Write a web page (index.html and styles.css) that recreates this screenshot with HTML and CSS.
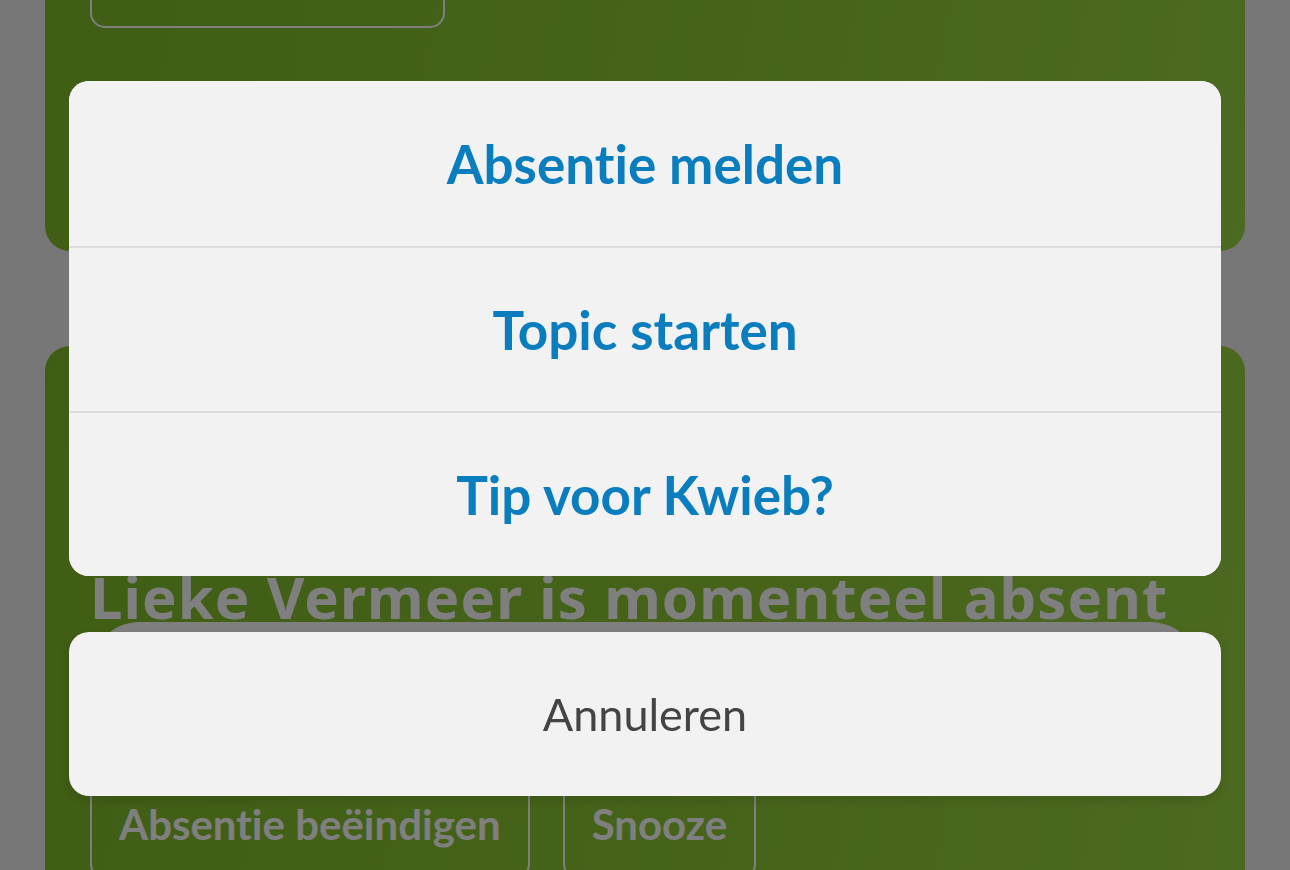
FILE: index.html
```html
<!DOCTYPE html>
<html lang="nl">
<head>
    <meta charset="UTF-8">
    <meta name="viewport" content="width=device-width, initial-scale=1.0">
    <title>Kwieb</title>
    <link rel="stylesheet" href="styles.css">
</head>
<body>

    <div class="page">
        <!-- card above the absence card -->
        <div class="card card-top">
            <button class="outline-btn wide"></button>
        </div>

        <!-- absence card -->
        <div class="card card-absent">
            <h2 class="absent-title">Lieke Vermeer is momenteel absent</h2>
            <div class="absent-box"></div>
            <div class="btn-row">
                <button class="outline-btn">Absentie beëindigen</button>
                <button class="outline-btn">Snooze</button>
            </div>
        </div>
    </div>

    <!-- action sheet -->
    <div class="backdrop"></div>
    <div class="sheet">
        <div class="sheet-group">
            <button class="sheet-item action">Absentie melden</button>
            <button class="sheet-item action">Topic starten</button>
            <button class="sheet-item action">Tip voor Kwieb?</button>
        </div>
        <button class="sheet-item cancel">Annuleren</button>
    </div>

</body>
</html>
```

FILE: styles.css
```css
body {
    margin: 0;
    background-color: #eeeeee;
    font-family: "Lato", "Liberation Sans", sans-serif;
    font-variant-ligatures: none;
    overflow: hidden;
    height: 870px;
}

.page {
    padding: 0 45px;
}

.card {
    background: linear-gradient(100deg, #80bb2a 0%, #8fc836 60%, #9ad443 100%);
    border-radius: 25px;
    padding: 0 45px;
}

.card-top {
    margin-top: -60px;
    padding-bottom: 222px;
}

.outline-btn {
    background: transparent;
    border: 2px solid #ffffff;
    border-radius: 15px;
    color: #ffffff;
    font-family: "Lato", "Liberation Sans", sans-serif;
    font-variant-ligatures: none;
    font-weight: 700;
    font-size: 42px;
    padding: 10px 27px 0;
    height: 120px;
    box-sizing: border-box;
}

.outline-btn.wide {
    width: 355px;
    height: 88px;
}

.card-absent {
    margin-top: 95px;
    padding-top: 227px;
    height: 600px;
}

.absent-title {
    margin: 0 0 1px;
    color: #ffffff;
    font-family: "Noto Sans", "Lato", sans-serif;
    font-size: 58px;
    font-weight: 700;
    line-height: 48px;
    letter-spacing: 1.1px;
    white-space: nowrap;
}

.absent-box {
    background-color: #ffffff;
    border-radius: 50px;
    height: 130px;
}

.btn-row {
    display: flex;
    gap: 33px;
    margin-top: 7px;
}

.backdrop {
    position: fixed;
    inset: 0;
    background-color: rgba(0, 0, 0, 0.5);
}

.sheet {
    position: fixed;
    left: 69px;
    right: 69px;
    bottom: 74px;
    display: flex;
    flex-direction: column;
    gap: 56px;
}

.sheet-group {
    background-color: #f2f2f2;
    border-radius: 20px;
    overflow: hidden;
    display: flex;
    flex-direction: column;
}

.sheet-item {
    height: 165px;
    border: none;
    background-color: #f2f2f2;
    font-family: "Lato", "Liberation Sans", sans-serif;
    font-variant-ligatures: none;
    padding: 0;
}

.sheet-item.action {
    color: #0a7dbf;
    font-weight: 700;
    font-size: 53px;
}

.sheet-item.action + .sheet-item.action {
    border-top: 2px solid #dcdcdc;
}

.sheet-item.cancel {
    height: 164px;
    border-radius: 20px;
    color: #444444;
    font-size: 45px;
    box-shadow: 0 4px 10px rgba(0, 0, 0, 0.12);
}
```
